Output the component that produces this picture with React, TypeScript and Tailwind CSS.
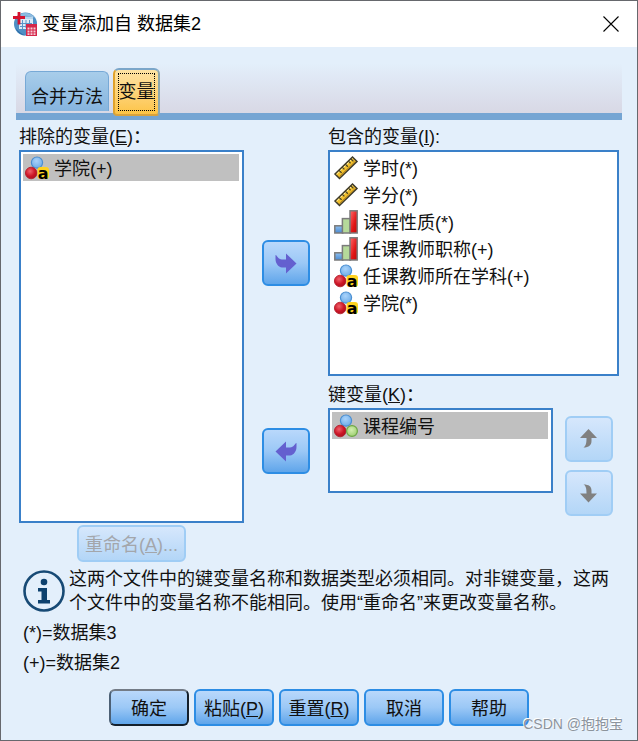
import type { ReactNode } from "react";

type Kind = "scale" | "ordinal" | "string" | "nominal";

function Defs() {
  return (
    <svg className="absolute h-0 w-0" aria-hidden="true">
      <defs>
        <radialGradient id="gBlue" cx="0.45" cy="0.35" r="0.7">
          <stop offset="0" stopColor="#a9d3fb" />
          <stop offset="1" stopColor="#6aa9e6" />
        </radialGradient>
        <radialGradient id="gRed" cx="0.4" cy="0.35" r="0.7">
          <stop offset="0" stopColor="#f0626c" />
          <stop offset="0.6" stopColor="#cc1526" />
          <stop offset="1" stopColor="#a80f1d" />
        </radialGradient>
        <radialGradient id="gGreen" cx="0.45" cy="0.4" r="0.7">
          <stop offset="0" stopColor="#d3eeb0" />
          <stop offset="1" stopColor="#97cb68" />
        </radialGradient>
        <linearGradient id="bRed" x1="0" y1="0" x2="1" y2="1">
          <stop offset="0" stopColor="#ff6a6a" />
          <stop offset="0.6" stopColor="#e01515" />
          <stop offset="1" stopColor="#c00808" />
        </linearGradient>
        <linearGradient id="bBlue" x1="0" y1="0" x2="0" y2="1">
          <stop offset="0" stopColor="#8fc0f0" />
          <stop offset="1" stopColor="#4a8ad0" />
        </linearGradient>
      </defs>
    </svg>
  );
}

function KindIcon({ kind }: { kind: Kind }) {
  return (
    <svg viewBox="0 0 24 24" className="h-6 w-6 shrink-0 overflow-visible" aria-hidden="true">
      {kind === "scale" && (
        <g>
          <path d="M1 18 L18.500 1 L23 5.500 L5.500 22.500 Z" fill="#f2c12e" stroke="#3d3a2c" strokeWidth="1.5" />
          <path d="M2.600 18.200 L18.500 2.700" stroke="#fff0a8" strokeWidth="1" />
          <path d="M5 14.300l2.600 2.600M8.200 11.200l2.200 2.200M11.300 8.200l2.600 2.600M14.400 5.100l2.200 2.200M17 3l2.400 2.400" stroke="#4d4525" strokeWidth="1.3" />
          <path d="M5.500 20.700 L21.300 5.400" stroke="#a5761a" strokeWidth="1" />
        </g>
      )}
      {kind === "ordinal" && (
        <g stroke="#7b7b7b" strokeWidth="1.5">
          <rect x="0.8" y="15.8" width="8" height="7.2" fill="url(#bBlue)" />
          <rect x="8.4" y="8.6" width="8" height="14.4" fill="#b5d99a" />
          <rect x="16" y="0.8" width="7.2" height="22.2" fill="url(#bRed)" />
        </g>
      )}
      {(kind === "string" || kind === "nominal") && (
        <g>
          <circle cx="12" cy="6.600" r="5.600" fill="url(#gBlue)" stroke="#4a8fd2" strokeWidth="1.2" />
          <circle cx="6.200" cy="17" r="5.800" fill="url(#gRed)" stroke="#b01624" strokeWidth="0.8" />
          {kind === "nominal" ? (
            <circle cx="18" cy="17" r="5.400" fill="url(#gGreen)" stroke="#6ca644" strokeWidth="1.2" />
          ) : (
            <g>
              <rect x="12.500" y="11" width="11.500" height="12" rx="3" fill="#ffd21f" />
              <text x="12.800" y="22.500" fontSize="16" fontWeight="700" fontFamily="DejaVu Sans, sans-serif" fill="#000">
                a
              </text>
            </g>
          )}
        </g>
      )}
    </svg>
  );
}

function AppIcon() {
  return (
    <svg viewBox="0 0 24 24" className="h-6 w-6 shrink-0" aria-hidden="true">
      <circle cx="12.500" cy="12" r="11.500" fill="#4f8fc4" />
      <path d="M3 6a11.500 11.500 0 0 1 19 0c-5-3-13-3-19 0z" fill="#8dbbe0" />
      <path d="M2.500 16a11.500 11.500 0 0 0 10 7.500c-4-1.500-7-4-10-7.500z" fill="#2b6aa5" />
      <path d="M6 7h14v10H6z" fill="#dcebf7" />
      <path d="M11 4.500h9v2.500h-9z" fill="#b7d4ec" />
      <path d="M7 11.500h12M7 14.500h7M9.500 8v9M13 8v8M16.500 8v4" stroke="#5b95c9" />
      <path d="M6 0v12.500M0 5.500h12" stroke="#d5112e" strokeWidth="2.800" />
      <path d="M13 12h11v12h-11z" fill="#d4274a" />
      <path d="M14.500 15.500h2v2h-2zM17.500 15.500h2v2h-2zM20.500 15.500h2v2h-2zM14.500 18.500h2v2h-2zM17.500 18.500h2v2h-2zM20.500 18.500h2v2h-2zM14.500 21.300h2v1.700h-2zM17.500 21.300h2v1.700h-2zM20.500 21.300h2v1.700h-2z" fill="#f7ccd6" />
    </svg>
  );
}

function Variable({ kind, name, selected = false }: { kind: Kind; name: string; selected?: boolean }) {
  return (
    <li
      role="option"
      aria-selected={selected}
      className={`flex h-[27px] items-center gap-[5px] pl-[2px] ${selected ? "bg-[#c0c0c0]" : ""}`}
    >
      <KindIcon kind={kind} />
      <span className="pt-[2px]">{name}</span>
    </li>
  );
}

function VariableList({ id, className, children }: { id: string; className: string; children: ReactNode }) {
  return (
    <ul
      role="listbox"
      aria-labelledby={id}
      className={`border-2 border-[#3a80c9] bg-white py-[2px] pr-[3px] pl-[2px] ${className}`}
    >
      {children}
    </ul>
  );
}

function ArrowButton({ label, direction }: { label: string; direction: "right" | "left" | "up" | "down" }) {
  const disabled = direction === "up" || direction === "down";
  return (
    <button
      type="button"
      aria-label={label}
      disabled={disabled}
      className={`flex h-[46px] w-12 items-center justify-center rounded-md border-2 bg-linear-to-b ${
        disabled
          ? "border-[#a0cdf5] from-[#d6e7fc] to-[#b3d6f7]"
          : "border-[#2d8de4] from-[#b9d8fb] via-[#9bc8f6] to-[#5fa5ea]"
      }`}
    >
      <svg viewBox="0 0 24 24" className="h-6 w-6" fill={disabled ? "#808080" : "#6460cf"} aria-hidden="true">
        {direction === "right" && <path d="M1.500 4C3.500 4.500 4 8.500 8 8.500H12V2.500L22.500 12.500L12 22.500V16.500H8C4 16 1.500 12 1.500 8Z" />}
        {direction === "left" && <path d="M22.500 4C20.500 4.500 20 8.500 16 8.500H12V2.500L1.500 12.500L12 22.500V16.500H16C20 16 22.500 12 22.500 8Z" />}
        {direction === "up" && <path d="M11.500 2L20 11H14.500V14C14.500 18 12 20.500 6.500 20.500C9 18.500 9.500 16 9.500 11H3Z" />}
        {direction === "down" && <path d="M11.500 21.500L20 12.500H14.500V9.500C14.500 5.500 12 3.500 6.500 3.500C9 5 9.500 7.500 9.500 12.500H3Z" />}
      </svg>
    </button>
  );
}

function ActionButton({ children, primary = false }: { children: ReactNode; primary?: boolean }) {
  return (
    <button
      type="button"
      className={`flex h-[37px] w-20 items-center justify-center rounded-md border-2 bg-linear-to-b from-[#b9d8fb] via-[#9bc8f6] to-[#5fa5ea] pt-[2px] ${
        primary ? "border-t-[#737b86] border-r-[#14202c] border-b-[#14202c] border-l-[#4c6075]" : "border-[#2d8de4]"
      }`}
    >
      <span>{children}</span>
    </button>
  );
}

export default function App() {
  return (
    <div className="relative border border-[#66686d] bg-[#e3effb] font-['Liberation_Sans','Noto_Sans_CJK_SC',sans-serif] text-[18px] leading-6 text-[#111]">
      <Defs />
      <header className="flex h-[46px] items-center justify-between bg-white pr-4 pl-3">
        <div className="flex items-center gap-[5px] text-black">
          <AppIcon />
          <h1>变量添加自 数据集2</h1>
        </div>
        <button type="button" aria-label="关闭" className="flex h-5 w-5 items-center justify-center">
          <svg viewBox="0 0 16 16" className="h-4 w-4" stroke="#000" strokeWidth="1.1" aria-hidden="true">
            <path d="M0.500 0.500L15.500 15.500M15.500 0.500L0.500 15.500" />
          </svg>
        </button>
      </header>

      <div className="px-[15px] pt-4">
        <div
          role="tablist"
          className="flex h-[57px] items-start gap-1 border-b-[7px] border-[#75a5d3] bg-linear-to-b from-[#e3effb] to-[#d8d8e5] pl-[9px]"
        >
          <button
            type="button"
            role="tab"
            aria-selected="false"
            className="mt-2 flex h-[40px] w-[84px] items-center justify-center rounded-t-md border border-b-0 border-[#77a9d6] bg-linear-to-b from-[#a8cdea] to-[#86b5df] pt-[10px]"
          >
            合并方法
          </button>
          <button
            type="button"
            role="tab"
            aria-selected="true"
            className="mt-[5px] h-12 w-[47px] rounded-t-md rounded-b-sm border-2 border-t-[#7ba6c9] border-r-[#8da7ae] border-b-[#d9a23c] border-l-[#e0a22c] bg-linear-to-b from-[#fde3a4] to-[#fdc445] p-[3px]"
          >
            <span className="flex h-full items-center justify-center border border-dotted border-black whitespace-nowrap">
              变量
            </span>
          </button>
        </div>
      </div>

      <main className="px-[18px] pt-[5px]">
        <div className="flex">
          <section className="flex flex-[225] flex-col">
            <h2 id="excluded" className="mb-px">
              排除的变量(<u>E</u>)：
            </h2>
            <VariableList id="excluded" className="h-[373px]">
              <Variable kind="string" name="学院(+)" selected />
            </VariableList>
            <button
              type="button"
              disabled
              className="mt-[2px] flex h-[37px] w-[109px] items-center justify-center self-center rounded-md border-2 border-[#a0cdf5] bg-linear-to-b from-[#d6e7fc] to-[#b3d6f7] pt-[2px] text-[#a3a6ab]"
            >
              <span>
                重命名(<u>A</u>)...
              </span>
            </button>
          </section>

          <div className="flex w-[84px] flex-col items-center gap-[142px] pt-[115px]">
            <ArrowButton label="移到包含的变量" direction="right" />
            <ArrowButton label="移到排除的变量" direction="left" />
          </div>

          <section className="flex flex-[291] flex-col">
            <h2 id="included" className="mb-px">
              包含的变量(<u>I</u>):
            </h2>
            <VariableList id="included" className="h-[226px]">
              <Variable kind="scale" name="学时(*)" />
              <Variable kind="scale" name="学分(*)" />
              <Variable kind="ordinal" name="课程性质(*)" />
              <Variable kind="ordinal" name="任课教师职称(+)" />
              <Variable kind="string" name="任课教师所在学科(+)" />
              <Variable kind="string" name="学院(*)" />
            </VariableList>
            <h2 id="key" className="mt-[7px] mb-px">
              键变量(<u>K</u>)：
            </h2>
            <div className="flex gap-3 pr-[6px]">
              <VariableList id="key" className="h-[85px] flex-1">
                <Variable kind="nominal" name="课程编号" selected />
              </VariableList>
              <div className="flex flex-col gap-2 pt-2">
                <ArrowButton label="上移" direction="up" />
                <ArrowButton label="下移" direction="down" />
              </div>
            </div>
          </section>
        </div>

        <div className="mt-[5px] flex items-center gap-1 pl-1">
          <svg viewBox="0 0 42 42" className="h-[42px] w-[42px] shrink-0" aria-hidden="true">
            <circle cx="21" cy="21" r="19.500" fill="none" stroke="#174a75" strokeWidth="2.600" />
            <circle cx="21" cy="12" r="3.300" fill="#0d416e" />
            <path d="M15 18h9v12h3v3.500H15V30h3.500v-8.500H15z" fill="#0d416e" />
          </svg>
          <p>这两个文件中的键变量名称和数据类型必须相同。对非键变量，这两个文件中的变量名称不能相同。使用“重命名”来更改变量名称。</p>
        </div>
        <div className="mt-[6px] flex flex-col gap-[6px] pl-1">
          <p>(*)=数据集3</p>
          <p>(+)=数据集2</p>
        </div>

        <footer className="mt-[14px] flex justify-center gap-[5px] pb-[14px]">
          <ActionButton primary>确定</ActionButton>
          <ActionButton>
            粘贴(<u>P</u>)
          </ActionButton>
          <ActionButton>
            重置(<u>R</u>)
          </ActionButton>
          <ActionButton>取消</ActionButton>
          <ActionButton>帮助</ActionButton>
        </footer>
      </main>

      <span className="absolute right-[14px] bottom-1 text-[14px] text-[#8d949c] [text-shadow:-1px_-1px_0_#ffffff]">CSDN @抱抱宝</span>
    </div>
  );
}
